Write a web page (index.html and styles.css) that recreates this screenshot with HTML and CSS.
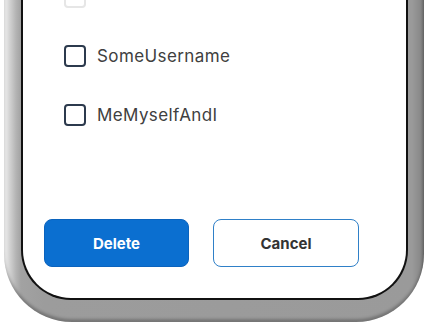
FILE: index.html
```html
<!DOCTYPE html>
<html lang="en">
<head>
<meta charset="utf-8">
<title>Delete users</title>
<link rel="stylesheet" href="styles.css">
</head>
<body>
<div class="frame">
  <div class="screen">
    <ul class="list">
      <li class="row faded"><span class="box"></span><span class="name">AnotherUser</span></li>
      <li class="row"><span class="box"></span><span class="name">SomeUsername</span></li>
      <li class="row"><span class="box"></span><span class="name">MeMyselfAndI</span></li>
    </ul>
    <div class="actions">
      <button class="btn primary">Delete</button>
      <button class="btn secondary">Cancel</button>
    </div>
  </div>
</div>
</body>
</html>
```

FILE: styles.css
```css
html, body {
  margin: 0;
  padding: 0;
  background: #ffffff;
  overflow: hidden;
  width: 425px;
  height: 325px;
}

.frame {
  margin: -60px 1px 0 4px;
  height: 382px;
  box-sizing: border-box;
  padding: 0 16px 22px 17px;
  border-radius: 0 0 68px 68px;
  background: linear-gradient(to right, #f4f4f4 0px, #d6d6d6 5px, #b4b4b4 12px, #a2a2a2 17px, #9c9c9c 40px, #9a9a9a calc(100% - 12px), #8a8a8a calc(100% - 4px), #6e6e6e 100%);
  box-shadow: inset 0 -3px 3px rgba(0, 0, 0, 0.25);
  display: flex;
}

.screen {
  flex: 1;
  background: #ffffff;
  border: 2px solid #111111;
  border-top: none;
  border-radius: 0 0 50px 50px;
  padding: 46px 0 0 20px;
  display: flex;
  flex-direction: column;
  font-family: "Inter", "Noto Sans", sans-serif;
}

.list {
  list-style: none;
  margin: 0;
  padding: 0 0 0 21px;
  display: flex;
  flex-direction: column;
  gap: 37px;
}

.row {
  display: flex;
  align-items: center;
  height: 22px;
  gap: 11px;
}

.box {
  width: 22px;
  height: 22px;
  box-sizing: border-box;
  border: 2px solid #2c3a4d;
  border-radius: 4px;
  background: #ffffff;
}

.name {
  font-size: 17px;
  color: #404040;
  letter-spacing: 0.4px;
}

.faded .name {
  visibility: hidden;
}

.faded .box {
  border-color: #e6e6e6;
}

.actions {
  display: flex;
  gap: 24px;
  margin-top: 93px;
  padding-left: 1px;
}

.btn {
  height: 48px;
  border-radius: 8px;
  font-family: "Inter", "Noto Sans", sans-serif;
  font-weight: 700;
  font-size: 15px;
  cursor: pointer;
}

.primary {
  width: 145px;
  background: #0b6fd0;
  color: #ffffff;
  border: 1px solid #0b63bd;
}

.secondary {
  width: 146px;
  background: #ffffff;
  color: #333333;
  border: 1px solid #2f80c8;
}
```
